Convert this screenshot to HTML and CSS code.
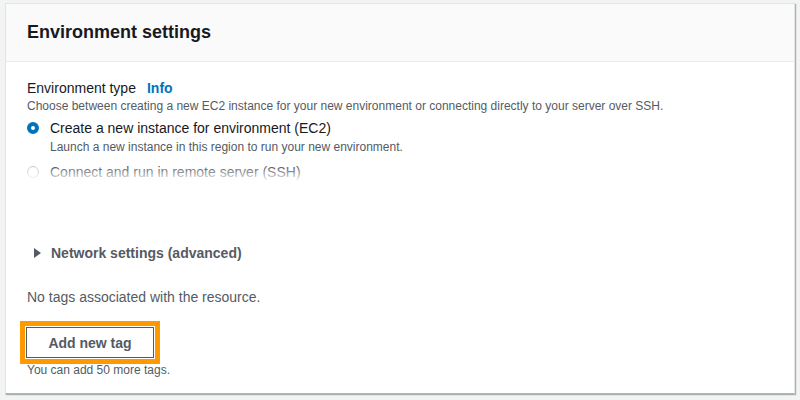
FILE: index.html
```html
<!DOCTYPE html>
<html>
<head>
<meta charset="utf-8">
<link rel="stylesheet" href="styles.css">
</head>
<body>
<div class="panel">
  <div class="panel-header">
    <h2 class="title">Environment settings</h2>
  </div>
  <div class="panel-body">
    <div class="field">
      <div class="label-row"><span class="label">Environment type</span><span class="info">Info</span></div>
      <div class="desc">Choose between creating a new EC2 instance for your new environment or connecting directly to your server over SSH.</div>
      <div class="radio-group">
        <div class="radio-item">
          <span class="radio checked"></span>
          <div class="radio-text">
            <div class="radio-label">Create a new instance for environment (EC2)</div>
            <div class="radio-desc">Launch a new instance in this region to run your new environment.</div>
          </div>
        </div>
        <div class="radio-item">
          <span class="radio"></span>
          <div class="radio-text">
            <div class="radio-label">Connect and run in remote server (SSH)</div>
          </div>
        </div>
      </div>
    </div>
    <div class="expander">
      <span class="caret"></span>
      <span class="expander-label">Network settings (advanced)</span>
    </div>
    <div class="tags">
      <div class="no-tags">No tags associated with the resource.</div>
      <button class="btn">Add new tag</button>
      <div class="hint">You can add 50 more tags.</div>
    </div>
  </div>
  <div class="fade"></div>
</div>
</body>
</html>
```

FILE: styles.css
```css
html, body {
  margin: 0;
  padding: 0;
  background: #f2f3f3;
  font-family: "Liberation Sans", Arial, sans-serif;
  color: #16191f;
}
body {
  padding: 3px 5px 0 5px;
  height: 400px;
  box-sizing: border-box;
}
.panel {
  position: relative;
  background: #fff;
  border: 1px solid #e3e5e5;
  border-bottom: 1px solid #aab7b8;
  box-shadow: 1px 1px 1px rgba(0,28,36,0.3);
  height: 391px;
  box-sizing: border-box;
  overflow: hidden;
}
.panel-header {
  background: #fafafa;
  border-bottom: 1px solid #eaeded;
  height: 58px;
  box-sizing: border-box;
  padding: 0 21px;
  display: flex;
  align-items: center;
}
.title {
  margin: 0;
  font-size: 18px;
  font-weight: 700;
  color: #16191f;
}
.panel-body {
  padding: 18px 21px 0 21px;
}
.label-row {
  display: flex;
  align-items: baseline;
  gap: 11px;
  height: 18px;
}
.label {
  font-size: 14px;
  color: #16191f;
}
.info {
  font-size: 14px;
  font-weight: 700;
  color: #0073bb;
}
.desc {
  font-size: 12px;
  color: #545b64;
  line-height: 16px;
}
.radio-group {
  margin-top: 4px;
}
.radio-item {
  display: flex;
  gap: 11px;
  align-items: flex-start;
  margin-bottom: 7px;
}
.radio {
  width: 12px;
  height: 12px;
  border-radius: 50%;
  border: 1px solid #aab7b8;
  box-sizing: border-box;
  margin-top: 4px;
  flex: none;
}
.radio.checked {
  border: 4px solid #0073bb;
}
.radio-label {
  font-size: 14px;
  line-height: 20px;
  color: #16191f;
}
.radio-desc {
  font-size: 12px;
  line-height: 16px;
  padding-top: 1px;
  color: #545b64;
}
.expander {
  margin-top: 61px;
  display: flex;
  align-items: center;
  gap: 10px;
  padding-left: 7px;
  height: 20px;
}
.caret {
  width: 0;
  height: 0;
  border-left: 7px solid #545b64;
  border-top: 5px solid transparent;
  border-bottom: 5px solid transparent;
}
.expander-label {
  font-size: 14px;
  font-weight: 700;
  color: #545b64;
}
.tags {
  margin-top: 25px;
}
.no-tags {
  font-size: 14px;
  color: #545b64;
  line-height: 18px;
}
.btn {
  display: block;
  margin-top: 21px;
  margin-left: -1px;
  width: 128px;
  height: 31px;
  background: #fff;
  border: 1px solid #545b64;
  border-radius: 0;
  outline: 5px solid #ff9900;
  outline-offset: 1px;
  font-family: "Liberation Sans", Arial, sans-serif;
  font-size: 14px;
  font-weight: 700;
  color: #545b64;
  padding: 0;
}
.hint {
  font-size: 12px;
  color: #545b64;
  line-height: 16px;
  margin-top: 4px;
}
.fade {
  position: absolute;
  left: -2px;
  right: -2px;
  top: 157px;
  height: 66px;
  background: linear-gradient(to bottom, rgba(255,255,255,0) 0%, #fff 32%, #fff 80%, rgba(255,255,255,0) 100%);
}
```
